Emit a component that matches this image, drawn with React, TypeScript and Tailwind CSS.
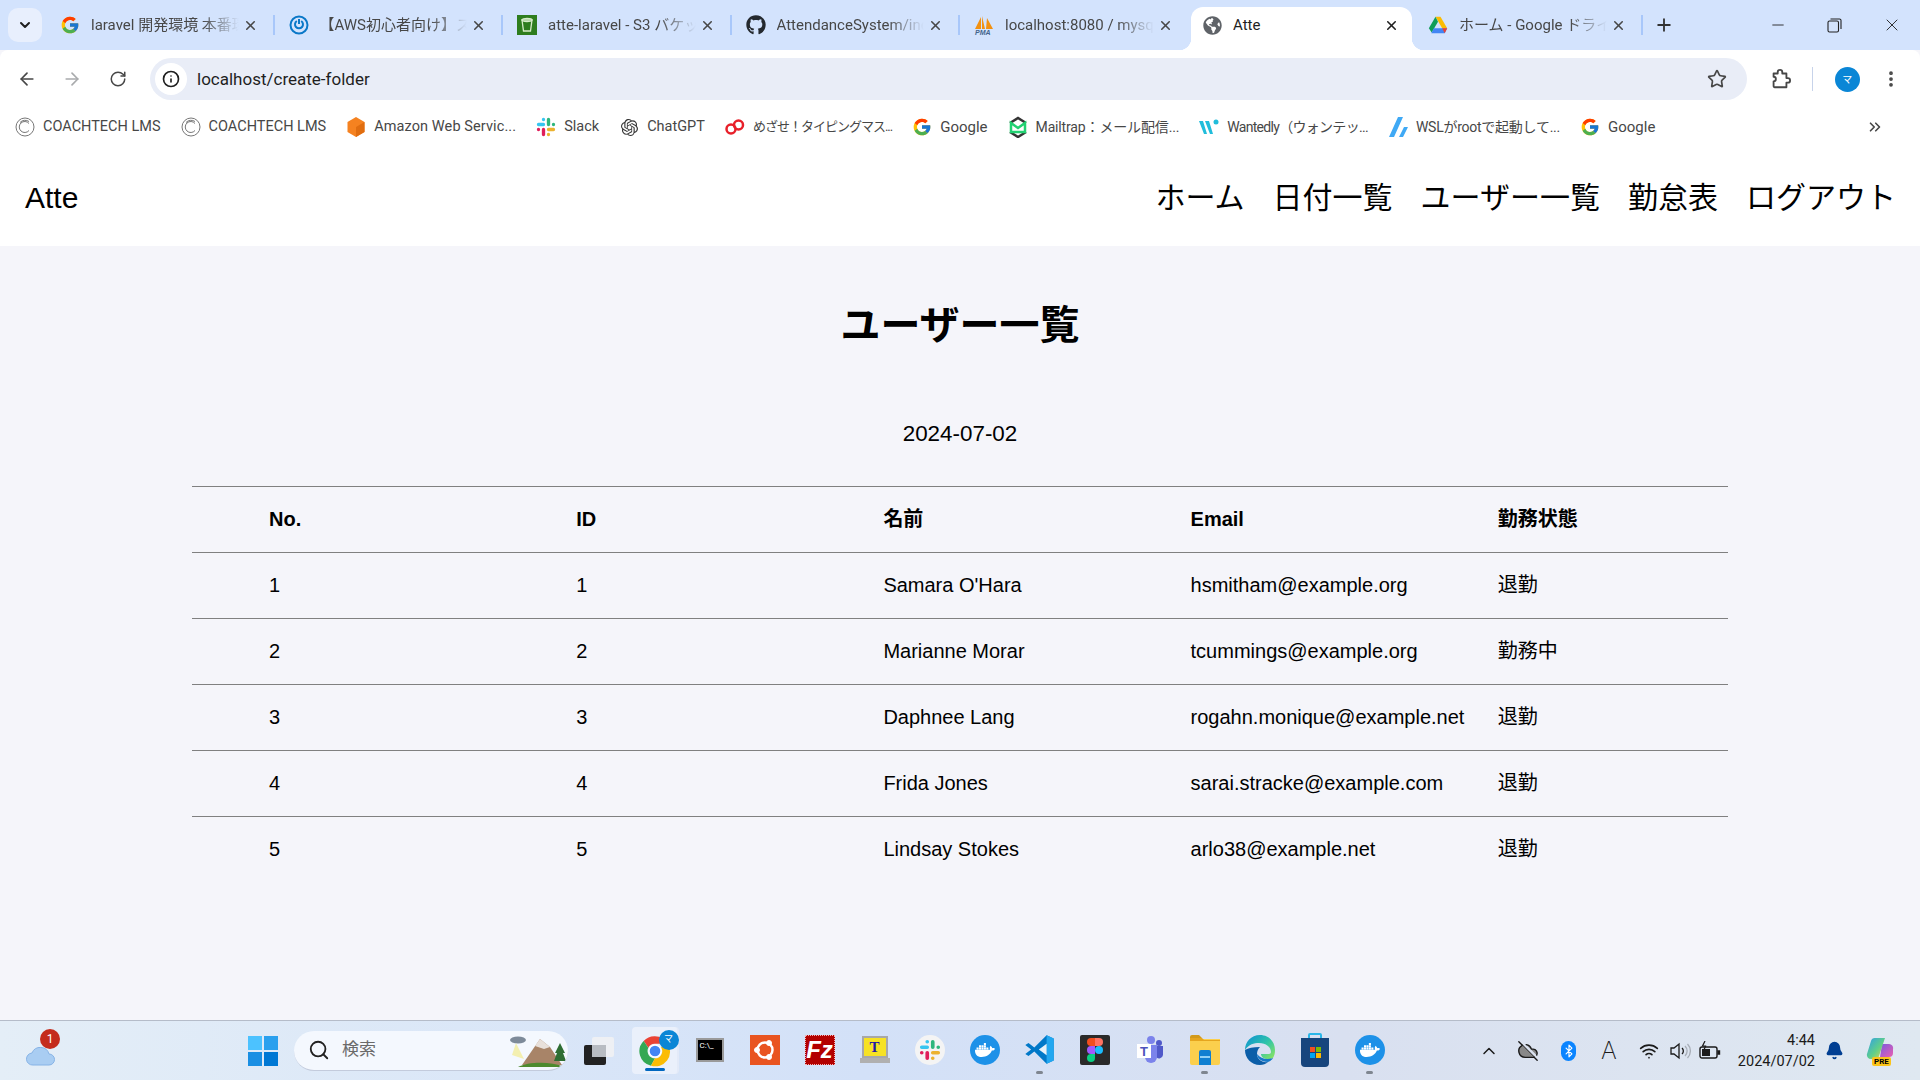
import { ArrowLeft, ArrowRight, RotateCw, Info, Star, EllipsisVertical, ChevronDown, ChevronsRight, ChevronUp, Plus, X, Minus, Search, Bluetooth, Wifi, Bell, CloudOff } from "lucide-react";
import { FaGithub, FaDocker, FaGlobeAmericas } from "react-icons/fa";
import { FcGoogle } from "react-icons/fc";
import { SiOpenai } from "react-icons/si";
import type { ReactNode } from "react";

const uiFont = "font-['Roboto','Noto_Sans_CJK_JP',sans-serif]";

function Drive({ size = 20 }: { size?: number }) {
  return (
    <svg width={size} height={size} viewBox="0 0 24 24">
      <path d="M9 2h6l8 14h-6z" fill="#fbbc04" />
      <path d="M9 2l3 6-7.500 13L1 16z" fill="#0f9d58" />
      <path d="M7 16h16l-3 6H4z" fill="#4285f4" />
      <path d="M20 22l3-6h-6z" fill="#ea4335" />
    </svg>
  );
}

function SlackMark({ size = 16 }: { size?: number }) {
  return (
    <svg width={size} height={size} viewBox="0 0 24 24" strokeWidth="4" strokeLinecap="round">
      <path d="M9 3v.01M9 9H3" stroke="#36c5f0" />
      <path d="M15 3v6M21 9h-.01" stroke="#2eb67d" />
      <path d="M15 21v-.01M15 15h6" stroke="#ecb22e" />
      <path d="M9 21v-6M3 15h.01" stroke="#e01e5a" />
    </svg>
  );
}

const tabs: { title: string; icon: ReactNode }[] = [
  { title: "laravel 開発環境 本番環境", icon: <FcGoogle size={20} /> },
  {
    title: "【AWS初心者向け】ストレージ",
    icon: (
      <svg width="20" height="20" viewBox="0 0 20 20" fill="none" stroke="#0a78c8" strokeWidth="2">
        <circle cx="10" cy="10" r="8.500" />
        <path d="M7.800 6a4 4 0 1 0 4.400 0M10 4v5" />
      </svg>
    ),
  },
  {
    title: "atte-laravel - S3 バケット",
    icon: (
      <svg width="20" height="20" viewBox="0 0 20 20">
        <rect width="20" height="20" fill="#2e7d1e" />
        <path d="M5 5h10l-1.500 11h-7z" fill="none" stroke="#d7ecc9" strokeWidth="1.300" />
        <ellipse cx="10" cy="5" rx="5" ry="1.500" fill="none" stroke="#d7ecc9" strokeWidth="1.300" />
      </svg>
    ),
  },
  { title: "AttendanceSystem/index", icon: <FaGithub size={20} className="text-[#24292f]" /> },
  {
    title: "localhost:8080 / mysql",
    icon: (
      <svg width="20" height="20" viewBox="0 0 20 20">
        <path d="M1 14 7 2v12zM8 14V1l3 13zM12 14l1-11 6 11z" fill="#f29111" />
        <text x="1" y="20" fontSize="7" fontWeight="700" fontStyle="italic" fill="#44648c" fontFamily="Liberation Sans">PMA</text>
      </svg>
    ),
  },
  { title: "Atte", icon: <FaGlobeAmericas size={19} className="text-[#5f6368]" /> },
  { title: "ホーム - Google ドライブ", icon: <Drive /> },
];

const tabBox: Record<number, string> = {
  4: "flex h-full w-[231px] shrink-0 items-center pb-[7px] pl-[14px] pr-[18px]",
  5: "relative flex h-full w-[221px] shrink-0 items-center rounded-t-[12px] bg-white pb-[7px] pl-[11px] pr-[13px]",
  6: "flex h-full w-[231px] shrink-0 items-center pb-[7px] pl-[16px]",
};

function Tab({ title, icon, index }: { title: string; icon: ReactNode; index: number }) {
  const active = index === 5;
  const hasSeparator = index !== 4 && index !== 5;
  return (
    <div className={tabBox[index] ?? "flex h-full w-[228.500px] shrink-0 items-center pb-[7px] pl-[14px]"}>
      {active && (
        <>
          <span className="absolute bottom-0 -left-[12px] h-3 w-3 bg-[radial-gradient(circle_at_0_0,transparent_12px,white_12.500px)]" />
          <span className="absolute -right-[12px] bottom-0 h-3 w-3 bg-[radial-gradient(circle_at_100%_0,transparent_12px,white_12.500px)]" />
        </>
      )}
      <span className="flex w-5 shrink-0 items-center justify-center">{icon}</span>
      <span
        className={
          active
            ? "ml-[11px] flex-1 overflow-hidden whitespace-nowrap text-[15px] text-[#1f1f1f]"
            : "ml-[11px] flex-1 overflow-hidden whitespace-nowrap text-[15px] text-[#474747] [mask-image:linear-gradient(to_right,black_75%,transparent)]"
        }
      >
        {title}
      </span>
      <X size={15} strokeWidth={2.500} className={active ? "ml-1 shrink-0 text-[#1f1f1f]" : "ml-1 shrink-0 text-[#474747]"} />
      {hasSeparator && <span className="ml-[15px] h-[20px] w-[2px] shrink-0 bg-[#a8c7fa]" />}
    </div>
  );
}

function CoachMark() {
  return (
    <svg width="20" height="20" viewBox="0 0 20 20" fill="none" stroke="#777" strokeWidth="1">
      <circle cx="10" cy="10" r="9" />
      <path d="M14 6.500a5.500 5.500 0 1 0 0 7M14 4.500a7 7 0 0 0-9 1" />
    </svg>
  );
}

const bookmarks: { label: string; text: string; icon: ReactNode }[] = [
  { label: "COACHTECH LMS", text: "text-[14.500px]", icon: <CoachMark /> },
  { label: "COACHTECH LMS", text: "text-[14.500px]", icon: <CoachMark /> },
  {
    label: "Amazon Web Servic...",
    text: "text-[14.500px] tracking-[0.100px]",
    icon: (
      <svg width="20" height="20" viewBox="0 0 20 20">
        <path d="M10 0l8.500 5v10L10 20l-8.500-5V5z" fill="#f58220" />
        <path d="M10 10l8.500-5v10L10 20z" fill="#e06d10" />
      </svg>
    ),
  },
  { label: "Slack", text: "text-[14.500px]", icon: <SlackMark size={20} /> },
  { label: "ChatGPT", text: "text-[14.500px]", icon: <SiOpenai size={17} className="text-[#333]" /> },
  {
    label: "めざせ！タイピングマス...",
    text: "text-[13px] tracking-[-1px]",
    icon: (
      <svg width="20" height="16" viewBox="0 0 20 16" fill="none" stroke="#e8202a" strokeWidth="2.500">
        <circle cx="6" cy="10" r="4.500" />
        <circle cx="13.500" cy="6" r="4.500" />
      </svg>
    ),
  },
  { label: "Google", text: "text-[15px]", icon: <FcGoogle size={20} /> },
  {
    label: "Mailtrap：メール配信...",
    text: "text-[14px] tracking-[-0.150px]",
    icon: (
      <svg width="20" height="22" viewBox="0 0 20 22" fill="none" strokeWidth="2.500">
        <path d="M2 7l8-5 8 5M2 16l8 5 8-5" stroke="#333" />
        <path d="M3 7v9h14V7l-7 5z" stroke="#22d172" />
      </svg>
    ),
  },
  {
    label: "Wantedly（ウォンテッ...",
    text: "text-[14px] tracking-[-0.700px]",
    icon: (
      <svg width="20" height="16" viewBox="0 0 20 16">
        <path d="M0 2h4l4 13H5zM6 2h4l4 13h-3z" fill="#21bddb" />
        <circle cx="17" cy="3" r="2.500" fill="#21bddb" />
      </svg>
    ),
  },
  {
    label: "WSLがrootで起動して...",
    text: "text-[14px] tracking-[-0.250px]",
    icon: (
      <svg width="20" height="20" viewBox="0 0 20 20" fill="#3fa9f5">
        <path d="M10 0h5L6 20H1zM16 10h4l-5 10h-4z" />
      </svg>
    ),
  },
  { label: "Google", text: "text-[15px]", icon: <FcGoogle size={20} /> },
];

function Chrome() {
  return (
    <svg width="32" height="32" viewBox="0 0 24 24">
      <path d="M12 1a11 11 0 0 1 9.500 5.500H12a5.500 5.500 0 0 0-5 3L3.500 4.500A11 11 0 0 1 12 1z" fill="#ea4335" />
      <path d="M3.500 4.500 7 9.500a5.500 5.500 0 0 0 5 8L9 23A11 11 0 0 1 3.500 4.500z" fill="#34a853" />
      <path d="M21.500 6.500A11 11 0 0 1 9 23l3-5.500a5.500 5.500 0 0 0 4.500-8.500z" fill="#fbbc04" />
      <circle cx="12" cy="12" r="5" fill="#fff" />
      <circle cx="12" cy="12" r="4" fill="#4285f4" />
    </svg>
  );
}

function DockerIcon() {
  return (
    <span className="flex h-[30px] w-[30px] items-center justify-center rounded-full bg-[#1d91e8]">
      <FaDocker size={20} className="text-white" />
    </span>
  );
}

const appIcons: { id: string; open?: boolean; icon: ReactNode }[] = [
  {
    id: "terminal",
    icon: (
      <span className="h-[24px] w-[28px] border-2 border-[#9a9a9a] bg-black pl-0.5 text-[8px] leading-[12px] text-white">C:\_</span>
    ),
  },
  {
    id: "ubuntu",
    icon: (
      <span className="flex h-[30px] w-[30px] items-center justify-center bg-[#e95420]">
        <svg width="24" height="24" viewBox="0 0 24 24" fill="none" stroke="#fff">
          <circle cx="12" cy="12" r="7.500" strokeWidth="2.500" />
          <circle cx="4" cy="12" r="2.500" fill="#fff" />
          <circle cx="16" cy="5" r="2.500" fill="#fff" />
          <circle cx="16" cy="19" r="2.500" fill="#fff" />
        </svg>
      </span>
    ),
  },
  {
    id: "filezilla",
    icon: (
      <span className="flex h-[30px] w-[30px] items-center justify-center border border-dotted border-[#f3b3b3] bg-[#b30000] font-['Liberation_Sans',sans-serif] text-[24px] leading-none font-bold text-white italic">
        Fz
      </span>
    ),
  },
  {
    id: "teraterm",
    icon: (
      <span className="flex flex-col items-center">
        <span className="flex h-[22px] w-[26px] items-center justify-center border-2 border-[#a8a8a8] bg-[#f7e224] font-['Liberation_Serif',serif] text-[15px] leading-none font-bold text-[#2418a8]">T</span>
        <span className="h-[5px] w-[30px] bg-[#b0b0b0]" />
      </span>
    ),
  },
  {
    id: "slack",
    icon: (
      <span className="flex h-[30px] w-[30px] items-center justify-center rounded-full bg-[#f4f4f4]">
        <SlackMark size={22} />
      </span>
    ),
  },
  { id: "docker", icon: <DockerIcon /> },
  {
    id: "vscode",
    open: true,
    icon: (
      <svg width="31" height="31" viewBox="0 0 24 24">
        <path d="M17.500 1 23 3.500v17L17.500 23 8 13.500l-4.500 3.500L1 15.500 5.500 12 1 8.500 3.500 7 8 10.500z" fill="#0078c8" />
        <path d="M17.500 1 23 3.500v17L17.500 23z" fill="#22a7f0" />
        <path d="M17.500 7.500v9L11.500 12z" fill="#fff" fillOpacity="0.900" />
      </svg>
    ),
  },
  {
    id: "figma",
    icon: (
      <span className="flex h-[30px] w-[30px] items-center justify-center rounded-[2px] bg-[#2a2a2a]">
        <svg width="16" height="24" viewBox="0 0 16 24">
          <path d="M8 0H4a4 4 0 0 0 0 8h4z" fill="#f24e1e" />
          <path d="M8 0h4a4 4 0 0 1 0 8H8z" fill="#ff7262" />
          <path d="M8 8H4a4 4 0 0 0 0 8h4z" fill="#a259ff" />
          <circle cx="12" cy="12" r="4" fill="#1abcfe" />
          <path d="M8 16H4a4 4 0 1 0 4 4z" fill="#0acf83" />
        </svg>
      </span>
    ),
  },
  {
    id: "teams",
    icon: (
      <svg width="30" height="30" viewBox="0 0 30 30">
        <circle cx="16" cy="5" r="4" fill="#7b83eb" />
        <circle cx="24" cy="8" r="3" fill="#5059c9" />
        <path d="M21 11h7v9a4 4 0 0 1-7 2z" fill="#5059c9" />
        <path d="M10 10h12v12a6 6 0 0 1-12 0z" fill="#7b83eb" />
        <rect x="2" y="9" width="14" height="14" fill="#fff" />
        <text x="5" y="21" fontSize="13" fontWeight="700" fill="#4b53bc" fontFamily="Liberation Sans">T</text>
      </svg>
    ),
  },
  {
    id: "explorer",
    open: true,
    icon: (
      <svg width="31" height="30" viewBox="0 0 31 30">
        <path d="M1 2a2 2 0 0 1 2-2h7l3 3h-12z" fill="#d29a1c" />
        <path d="M1 4h30v24a2 2 0 0 1-2 2H3a2 2 0 0 1-2-2z" fill="#fbcf4d" />
        <path d="M1 3h12l2 2h16v1H1z" fill="#e6a51e" />
        <path d="M10 17a2 2 0 0 1 2-2h8a2 2 0 0 1 2 2v13H10z" fill="#0f7fd1" />
        <rect x="11" y="21" width="10" height="2" fill="#8fd0f5" />
      </svg>
    ),
  },
  {
    id: "edge",
    icon: (
      <svg width="30" height="30" viewBox="0 0 30 30">
        <defs>
          <linearGradient id="edgeTop" x1="0" y1="0" x2="1" y2="0.800">
            <stop offset="0" stopColor="#0c8fd6" />
            <stop offset="0.600" stopColor="#2fc4a8" />
            <stop offset="1" stopColor="#7fe06a" />
          </linearGradient>
        </defs>
        <path d="M15 0C6 0 0 7 0 15c4-6 9-7 14-7 7 0 12 4 12 9 0 1-1 2-2 2h-8c0 3 3 5 7 5 2 0 4-.500 5-1 1.500-2.500 2-5 2-8C30 6 23 0 15 0z" fill="url(#edgeTop)" />
        <path d="M0 15c0 8 6 15 15 15 3 0 6-1 8-3-6 1-11-3-11-8 0-3 1-5 3-7-7 0-12 1-15 3z" fill="#0b5ea8" />
        <path d="M12 19c0 4 4 8 11 8 2-1 4-2 5-4-6 2-12 1-16-4z" fill="#1578c8" />
      </svg>
    ),
  },
  {
    id: "store",
    icon: (
      <svg width="30" height="34" viewBox="0 0 30 34">
        <path d="M9 6V2a1 1 0 0 1 1-1h10a1 1 0 0 1 1 1v4" fill="none" stroke="#2ab6e8" strokeWidth="2" />
        <path d="M1 5h28v25a4 4 0 0 1-4 4H5a4 4 0 0 1-4-4z" fill="#17457d" />
        <rect x="10" y="14" width="5" height="5" fill="#f25022" />
        <rect x="16" y="14" width="5" height="5" fill="#7fba00" />
        <rect x="10" y="20" width="5" height="5" fill="#00a4ef" />
        <rect x="16" y="20" width="5" height="5" fill="#ffb900" />
      </svg>
    ),
  },
  { id: "docker2", open: true, icon: <DockerIcon /> },
];

const users = [
  { id: 1, name: "Samara O'Hara", email: "hsmitham@example.org", status: "退勤" },
  { id: 2, name: "Marianne Morar", email: "tcummings@example.org", status: "勤務中" },
  { id: 3, name: "Daphnee Lang", email: "rogahn.monique@example.net", status: "退勤" },
  { id: 4, name: "Frida Jones", email: "sarai.stracke@example.com", status: "退勤" },
  { id: 5, name: "Lindsay Stokes", email: "arlo38@example.net", status: "退勤" },
];

function BrowserChrome() {
  return (
    <div className={uiFont}>
      <div className="flex h-[50px] items-end bg-[#d3e3fd]">
        <div className="flex h-[43px] flex-1 items-center">
          <div className="mb-2 ml-2 mr-1 flex h-[34px] w-[34px] items-center justify-center self-end rounded-[10px] bg-[#e8effd]">
            <ChevronDown size={16} strokeWidth={3} className="text-[#1f1f1f]" />
          </div>
          {tabs.map((t, i) => (
            <Tab key={t.title} title={t.title} icon={t.icon} index={i} />
          ))}
          <Plus size={20} strokeWidth={2.200} className="mb-[7px] ml-[11px] text-[#333]" />
        </div>
        <div className="flex h-full items-center text-[#222]">
          <span className="flex w-[57px] justify-center"><Minus size={18} strokeWidth={1.200} /></span>
          <span className="flex w-[57px] justify-center">
            <svg width="15" height="15" viewBox="0 0 15 15" fill="none" stroke="#222" strokeWidth="1.100">
              <rect x="1" y="3" width="10.500" height="11" rx="1.500" />
              <path d="M3.500 1h9a1.500 1.500 0 0 1 1.500 1.500V11" />
            </svg>
          </span>
          <span className="flex w-[57px] justify-center"><X size={20} strokeWidth={1.100} /></span>
        </div>
      </div>
      <div className="flex h-[58px] items-center rounded-t-[8px] bg-white">
        <div className="flex w-[150px] items-center gap-[25px] pl-[17px]">
          <ArrowLeft size={20} className="text-[#474747]" />
          <ArrowRight size={20} className="text-[#a9abad]" />
          <RotateCw size={18} className="ml-[2px] text-[#474747]" />
        </div>
        <div className="flex h-[42px] w-[1597px] items-center rounded-full bg-[#e9edf7] pl-[5px] pr-[20px]">
          <span className="flex h-8 w-8 items-center justify-center rounded-full bg-white">
            <Info size={18} strokeWidth={2.200} className="text-[#1f1f1f]" />
          </span>
          <span className="ml-2.5 flex-1 pt-[2px] text-[17px] text-[#1f1f1f]">localhost/create-folder</span>
          <Star size={20} strokeWidth={2} className="text-[#474747]" />
        </div>
        <div className="flex flex-1 items-center justify-between pl-[22px] pr-[19px]">
          <svg width="22" height="22" viewBox="0 0 24 24" fill="none" stroke="#474747" strokeWidth="2" strokeLinejoin="round">
            <path d="M5 6h4.500V4.500a2.500 2.500 0 0 1 5 0V6H19v5h1.500a2.500 2.500 0 0 1 0 5H19v5H6a1 1 0 0 1-1-1v-5.500a2 2 0 0 0 0-5z" />
          </svg>
          <span className="h-[24px] w-px bg-[#c7d3ea]" />
          <span className="flex h-[25px] w-[25px] items-center justify-center rounded-full bg-[#0a86d6] text-[10px] text-white">マ</span>
          <EllipsisVertical size={20} strokeWidth={2.500} className="text-[#474747]" />
        </div>
      </div>
      <div className="flex h-[38px] items-center bg-white pl-[15px] pr-[36px]">
        <div className="flex flex-1 items-center gap-[20px]">
          {bookmarks.map((b, i) => (
            <span key={i} className={`flex items-center gap-[8px] whitespace-nowrap text-[#474747] ${b.text}`}>
              <span className="flex w-5 justify-center">{b.icon}</span>
              {b.label}
            </span>
          ))}
        </div>
        <ChevronsRight size={18} strokeWidth={2.200} className="text-[#474747]" />
      </div>
    </div>
  );
}

function Taskbar() {
  return (
    <footer className={`flex h-[60px] items-center border-t border-[#b5bcc9] bg-[linear-gradient(90deg,#e4eef7,#d3e1f8_45%,#d9e0f0_70%,#dfe8f1)] ${uiFont}`}>
      <div className="relative ml-[26px] w-[36px]">
        <svg width="30" height="22" viewBox="0 0 30 22" className="mt-2">
          <path d="M7 21a6 6 0 0 1-1-12 9 9 0 0 1 17 1 5.500 5.500 0 0 1 0 11z" fill="#a9cdf2" stroke="#86b3e6" />
        </svg>
        <span className="absolute -top-[7px] left-[14px] flex h-5 w-5 items-center justify-center rounded-full bg-[#c42b1c] text-[12px] text-white">1</span>
      </div>
      <div className="ml-[186px] flex h-[30px] w-[30px] shrink-0 flex-wrap content-between justify-between">
        <span className="h-[14px] w-[14px] bg-[#4cc2ff]" />
        <span className="h-[14px] w-[14px] bg-[#2aa0ee]" />
        <span className="h-[14px] w-[14px] bg-[#1a8fe3]" />
        <span className="h-[14px] w-[14px] bg-[#0078d4]" />
      </div>
      <div className="ml-[16px] flex h-[40px] w-[274px] shrink-0 items-center overflow-hidden rounded-full border-b border-[#c3cbdc] bg-[#f4f8fe] pl-[14px]">
        <Search size={22} strokeWidth={2} className="text-[#222]" />
        <span className="ml-[12px] flex-1 text-[17px] text-[#6a6a6a]">検索</span>
        <svg width="58" height="38" viewBox="0 0 58 38" className="shrink-0">
          <ellipse cx="8" cy="9" rx="8" ry="3.500" fill="#7d8a99" />
          <path d="M6 12 14 28 2 24z" fill="#f3efb0" />
          <path d="M12 34 30 8l10 8 12 18z" fill="#a88468" />
          <path d="M25 15 30 8l10 8-6 2z" fill="#e8e0da" />
          <path d="M8 36c10-5 32-6 46 0z" fill="#4c8a2e" />
          <path d="M50 12l5 10h-2l3 8H44l3-8h-2z" fill="#2f6e33" />
        </svg>
      </div>
      <div className="ml-[16px] relative h-[28px] w-[30px] shrink-0">
        <span className="absolute right-0 top-0 h-[20px] w-[22px] rounded-[2px] bg-[#eef0f4]" />
        <span className="absolute bottom-0 left-0 h-[20px] w-[22px] rounded-[2px] bg-[#222]" />
        <span className="absolute left-[8px] top-[8px] h-[12px] w-[14px] bg-[#b8bcc2]" />
      </div>
      <div className="ml-[18px] flex h-[47px] w-[47px] shrink-0 flex-col items-center justify-start rounded-[4px] border-r-2 border-[#e3eaf8] bg-[#eaf0fb] pt-[8px]">
        <span className="relative flex">
          <Chrome />
          <span className="absolute -right-[8px] -top-[5px] flex h-5 w-5 items-center justify-center rounded-full bg-[#0a86d6] text-[9px] text-white">マ</span>
        </span>
        <span className="mt-[1px] h-[3px] w-5 rounded-full bg-[#0067c0]" />
      </div>
      <div className="flex items-center pl-[3px]">
        {appIcons.map((a) => (
          <span key={a.id} className="flex h-[52px] w-[55px] flex-col items-center justify-start pt-[7px]">
            <span className="flex h-[36px] items-center justify-center">{a.icon}</span>
            <span className={a.open ? "mt-[3px] h-[3px] w-[7px] rounded-full bg-[#7f8690]" : "mt-[3px] h-[3px] w-[7px]"} />
          </span>
        ))}
      </div>
      <div className="ml-auto flex items-center text-[#1a1a1a]">
        <ChevronUp size={20} strokeWidth={1.800} />
        <CloudOff size={22} strokeWidth={1.500} className="ml-[18px]" fill="#888" />
        <span className="ml-[22px] flex h-[20px] w-[15px] items-center justify-center rounded-full bg-[#0a84ff]">
          <Bluetooth size={14} className="text-white" />
        </span>
        <span className="ml-[25px] font-['Inter',sans-serif] text-[24px] leading-none font-extralight">A</span>
        <Wifi size={20} className="ml-[22px]" />
        <svg width="22" height="20" viewBox="0 0 22 20" fill="none" stroke="#1a1a1a" strokeWidth="1.300" className="ml-[10px]">
          <path d="M2 7h3l5-4v14l-5-4H2z" />
          <path d="M13 7a4 4 0 0 1 0 6" />
          <path d="M16 5a7 7 0 0 1 0 10M18.500 3a10 10 0 0 1 0 14" stroke="#a7adb6" />
        </svg>
        <svg width="22" height="20" viewBox="0 0 22 20" fill="none" stroke="#1a1a1a" strokeWidth="1.400" className="ml-[8px]">
          <rect x="1" y="6" width="17" height="11" rx="2" />
          <rect x="3" y="8" width="8" height="7" fill="#1a1a1a" stroke="none" />
          <path d="M19 10v3h1.500v-3z" fill="#1a1a1a" />
          <path d="M6 0 3.500 5h3L5 9" strokeWidth="1.200" />
        </svg>
        <div className="ml-[17px] text-right text-[14.500px] leading-[21px]">
          <div>4:44</div>
          <div>2024/07/02</div>
        </div>
        <Bell size={19} className="ml-[10px] text-[#003e92]" fill="#003e92" />
        <span className="relative ml-[22px] mr-[26px] flex h-[28px] w-[28px]">
          <svg width="28" height="24" viewBox="0 0 28 24">
            <defs>
              <linearGradient id="copilotA" x1="0" y1="0" x2="1" y2="1">
                <stop offset="0" stopColor="#2f9fe8" />
                <stop offset="0.550" stopColor="#5fcf8a" />
                <stop offset="1" stopColor="#e8d24a" />
              </linearGradient>
              <linearGradient id="copilotB" x1="0" y1="0" x2="1" y2="1">
                <stop offset="0" stopColor="#7a5be0" />
                <stop offset="1" stopColor="#ea5fb0" />
              </linearGradient>
            </defs>
            <path d="M16 7h7a4 4 0 0 1 4 5v4a4 4 0 0 1-4 4h-9z" fill="url(#copilotB)" />
            <path d="M9 1h10l-7 21H5a4 4 0 0 1-4-5l4-13a4 4 0 0 1 4-3z" fill="url(#copilotA)" />
          </svg>
          <span className="absolute -bottom-[1px] left-[6px] rounded-[2px] bg-[#fcc419] px-[2px] text-[8px] leading-[9px] font-bold text-black">PRE</span>
        </span>
      </div>
    </footer>
  );
}

export default function App() {
  return (
    <div className="flex h-screen flex-col overflow-hidden bg-[#f5f5fa] font-['Liberation_Sans','Noto_Sans_CJK_JP',sans-serif] text-black">
      <BrowserChrome />
      <header className="flex h-[100px] items-center justify-between bg-white pl-[25px] pr-[24px] pt-[2px] text-[30px]">
        <h1>Atte</h1>
        <nav className="flex gap-[28px]">
          <a>ホーム</a>
          <a>日付一覧</a>
          <a>ユーザー一覧</a>
          <a>勤怠表</a>
          <a>ログアウト</a>
        </nav>
      </header>
      <main className="flex-1 px-[192px]">
        <h2 className="mt-[49px] text-center text-[40px] leading-[60px] font-bold">ユーザー一覧</h2>
        <p className="mt-[65px] text-center text-[22.400px] leading-[28px]">2024-07-02</p>
        <table className="mt-[38px] w-full table-fixed border-collapse text-[20px]">
          <thead>
            <tr className="h-[66px] border-y border-[#808080] text-left">
              <th className="pb-[2px] pl-[77px]">No.</th>
              <th className="pb-[2px] pl-[77px]">ID</th>
              <th className="pb-[2px] pl-[77px]">名前</th>
              <th className="pb-[2px] pl-[77px]">Email</th>
              <th className="pb-[2px] pl-[77px]">勤務状態</th>
            </tr>
          </thead>
          <tbody>
            {users.map((u, i) => (
              <tr key={u.id} className={i < users.length - 1 ? "h-[66px] border-b border-[#808080]" : "h-[66px]"}>
                <td className="pb-[2px] pl-[77px]">{i + 1}</td>
                <td className="pb-[2px] pl-[77px]">{u.id}</td>
                <td className="pb-[2px] pl-[77px]">{u.name}</td>
                <td className="pb-[2px] pl-[77px] whitespace-nowrap">{u.email}</td>
                <td className="pb-[2px] pl-[77px]">{u.status}</td>
              </tr>
            ))}
          </tbody>
        </table>
      </main>
      <Taskbar />
    </div>
  );
}
